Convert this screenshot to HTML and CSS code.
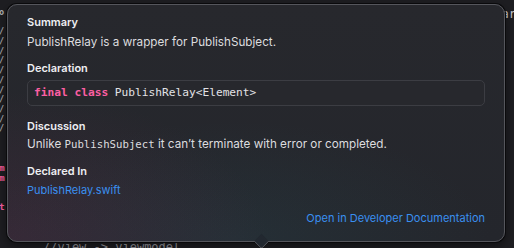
FILE: index.html
```html
<!DOCTYPE html>
<html lang="en">
<head>
  <meta charset="UTF-8" />
  <title>Quick Help – PublishRelay</title>
  <link rel="stylesheet" href="styles.css">
</head>
<body>
  <!-- editor text peeking out behind the popover -->
  <div class="code-left">
    <span>o</span>
    <span></span>
    <span>/</span>
    <span>/</span>
    <span>/</span>
    <span>/</span>
    <span>/</span>
    <span>/</span>
    <span>/</span>
    <span>/</span>
    <span>/</span>
    <span>/</span>
    <span>/</span>
    <span></span>
    <span></span>
    <span></span>
    <span class="kw">m</span>
    <span class="kw">m</span>
    <span></span>
    <span></span>
    <span class="kw">t</span>
  </div>
  <pre class="code-right">ar</pre>
  <pre class="code-bottom">//view -&gt; viewmodel</pre>

  <div class="popover">
    <h2 class="section-title first">Summary</h2>
    <p class="text">PublishRelay is a wrapper for PublishSubject.</p>

    <h2 class="section-title">Declaration</h2>
    <div class="decl"><span class="kw">final</span> <span class="kw">class</span> PublishRelay&lt;Element&gt;</div>

    <h2 class="section-title gap-lg">Discussion</h2>
    <p class="text tight">Unlike <code>PublishSubject</code> it can’t terminate with error or completed.</p>

    <h2 class="section-title">Declared In</h2>
    <a class="link" href="#">PublishRelay.swift</a>

    <div class="footer-link">
      <a class="link" href="#">Open in Developer Documentation</a>
    </div>
  </div>
</body>
</html>
```

FILE: styles.css
```css
:root {
  --editor-bg: #1e1e22;
  --pop-border: #55565c;
  --heading: #eeeef2;
  --body-text: #dcdcdf;
  --keyword: #fc5fa3;
  --link: #3a8ff0;
  --mono: "DejaVu Sans Mono", "Liberation Mono", monospace;
}
html, body {
  margin: 0;
  height: 100%;
}
body {
  background-color: var(--editor-bg);
  font-family: Inter, "Noto Sans", sans-serif;
  position: relative;
  overflow: hidden;
}
pre {
  margin: 0;
  font-family: var(--mono);
  color: #c8c8cc;
}
.code-left {
  position: absolute;
  top: 8px;
  left: -1px;
  display: flex;
  flex-direction: column;
  font-family: var(--mono);
  font-size: 8.5px;
  font-weight: bold;
  color: #b0b0b4;
}
.code-left span {
  display: block;
  height: 9.7px;
  line-height: 9.7px;
}
.code-left .kw {
  color: var(--keyword);
  font-size: 9.5px;
}
.code-right {
  position: absolute;
  top: 7px;
  right: -2px;
  font-size: 12px;
}
.code-bottom {
  position: absolute;
  left: 43px;
  top: 240px;
  font-size: 12px;
  color: #9a9aa0;
}

.popover {
  position: absolute;
  left: 7px;
  top: 4px;
  width: 498px;
  height: 238px;
  box-sizing: border-box;
  padding: 8px 19px 0;
  border: 1px solid var(--pop-border);
  border-radius: 10px;
  box-shadow: 0 0 0 1px #0a0a0c, 0 4px 12px rgba(0,0,0,0.5);
  background:
    radial-gradient(ellipse 260px 150px at 0% 100%, rgba(120, 50, 90, 0.22), transparent),
    radial-gradient(ellipse 260px 120px at 45% 100%, rgba(40, 80, 90, 0.22), transparent),
    linear-gradient(180deg, #27282d 0%, #24262c 100%);
  display: flex;
  flex-direction: column;
  align-items: flex-start;
}
.popover::after {
  content: "";
  position: absolute;
  left: 248px;
  bottom: -6px;
  width: 10px;
  height: 10px;
  background: #222830;
  border-right: 1px solid var(--pop-border);
  border-bottom: 1px solid var(--pop-border);
  transform: rotate(45deg);
  border-bottom-right-radius: 2px;
}
.section-title {
  margin: 8px 0 0;
  font-size: 11px;
  line-height: 18px;
  font-weight: 600;
  color: var(--heading);
}
.section-title.first {
  margin-top: 0;
}
.section-title.gap-lg {
  margin-top: 11px;
}
.text {
  margin: 2px 0 0;
  font-size: 11.7px;
  line-height: 18px;
  color: var(--body-text);
}
.text.tight {
  margin-top: 0;
}
.text code {
  font-family: var(--mono);
  font-size: 10.7px;
}
.decl {
  margin-top: 3px;
  align-self: stretch;
  height: 26px;
  box-sizing: border-box;
  padding: 0 6px;
  line-height: 24px;
  background: #27282d;
  border: 1px solid #3c3d43;
  border-radius: 5px;
  font-family: var(--mono);
  font-size: 11.2px;
  color: #e2e2e6;
  white-space: pre;
}
.kw {
  color: var(--keyword);
  font-weight: bold;
}
.link {
  margin-top: 1px;
  font-size: 11px;
  line-height: 18px;
  color: var(--link);
  text-decoration: none;
}
.footer-link {
  align-self: stretch;
  display: flex;
  justify-content: flex-end;
  margin-top: 10px;
}
.footer-link .link {
  margin-top: 0;
}
```
